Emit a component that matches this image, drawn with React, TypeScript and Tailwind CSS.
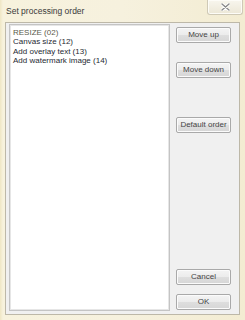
import React from "react";

const font = { fontFamily: '"Liberation Sans", Arial, sans-serif' };

function WinButton({ label, className = "" }: { label: string; className?: string }) {
  return (
    <button
      className={`block h-[16px] w-[55px] rounded-[2px] border border-[#a9a9a9] bg-[linear-gradient(to_bottom,#f4f4f4_0%,#ececec_48%,#dedede_52%,#d6d6d6_100%)] text-[8px] leading-none text-[#444] shadow-[inset_0_0_0_1px_#fbfbfb] ${className}`}
    >
      {label}
    </button>
  );
}

export default function App() {
  const items = ["RESIZE (02)", "Canvas size (12)", "Add overlay text (13)", "Add watermark image (14)"];

  return (
    <div
      className="flex h-[320px] w-[245px] flex-col bg-[linear-gradient(to_right,#efe6c4_0px,#f7f2dd_3px,#f6f1de_50%,#f3ecd2_100%)]"
      style={font}
    >
      <div className="flex h-[22px] items-start justify-between pl-[6px] pr-[2px]">
        <span className="mt-[5px] text-[8.5px] leading-[12px] text-[#3a3a3a]">Set processing order</span>
        <div className="flex h-[15px] w-[36px] items-center justify-center rounded-b-[3px] border border-t-0 border-[#cfc9b6] bg-[linear-gradient(to_bottom,#f8f6ee,#ece7d6)] shadow-[inset_0_0_0_1px_#fdfcf7]">
          <svg width="9" height="8" viewBox="0 0 9 8">
            <path d="M1 1 L8 7 M8 1 L1 7" stroke="#ffffff" strokeWidth="3" strokeLinecap="round" />
            <path d="M1 1 L8 7 M8 1 L1 7" stroke="#8a8a8a" strokeWidth="1.4" strokeLinecap="round" />
          </svg>
        </div>
      </div>

      <div className="mx-[5px] mb-[5px] flex flex-1 gap-[6px] border border-[#bdb8a8] bg-[#f0f0f0] pb-[3px] pl-[3px] pr-[6px] pt-[1px]">
        <div className="w-[161px] border border-[#c4c4c4] bg-white p-[1px] shadow-[inset_0_0_0_1px_#e6e6e6]">
          <div className="flex flex-col pl-[2px] pt-[2px]">
            {items.map((item, i) => (
              <div
                key={item}
                className={`text-[8px] leading-[9.4px] ${i === 0 ? "text-[#5a5a4a]" : "text-[#262a33]"}`}
              >
                {item}
              </div>
            ))}
          </div>
        </div>

        <div className="flex flex-col pb-[1px] pt-[3px]">
          <WinButton label="Move up" />
          <WinButton label="Move down" className="mt-[19px]" />
          <WinButton label="Default order" className="mt-[39px]" />
          <WinButton label="Cancel" className="mt-auto" />
          <WinButton label="OK" className="mt-[9px]" />
        </div>
      </div>
    </div>
  );
}
